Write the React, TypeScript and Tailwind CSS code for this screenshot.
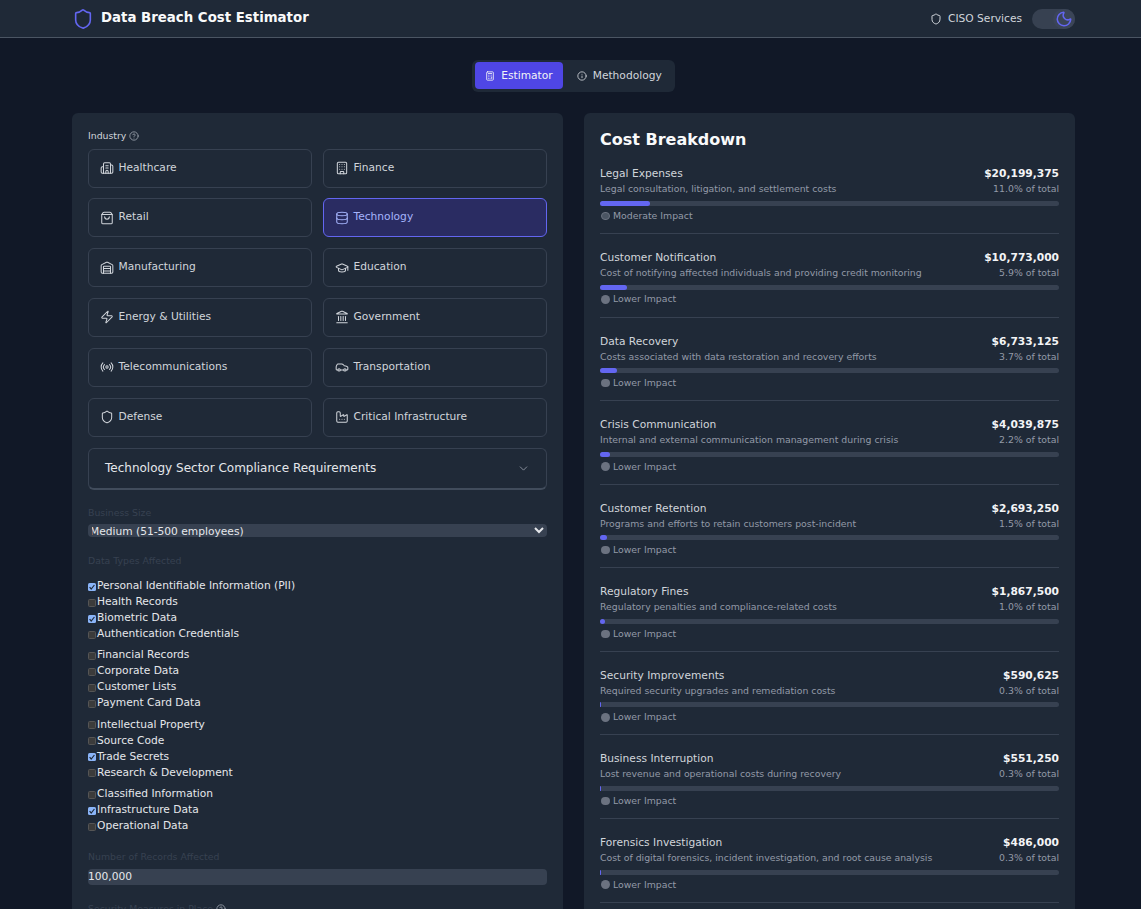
import {
  Building,
  Building2,
  Calculator,
  Car,
  ChevronDown,
  CircleHelp,
  Database,
  Factory,
  GraduationCap,
  Info,
  Landmark,
  Moon,
  Radio,
  Shield,
  ShoppingBag,
  Warehouse,
  Zap,
  type LucideIcon,
} from "lucide-react";

const industries: { name: string; icon: LucideIcon; active?: boolean }[] = [
  { name: "Healthcare", icon: Building2 },
  { name: "Finance", icon: Building },
  { name: "Retail", icon: ShoppingBag },
  { name: "Technology", icon: Database, active: true },
  { name: "Manufacturing", icon: Warehouse },
  { name: "Education", icon: GraduationCap },
  { name: "Energy & Utilities", icon: Zap },
  { name: "Government", icon: Landmark },
  { name: "Telecommunications", icon: Radio },
  { name: "Transportation", icon: Car },
  { name: "Defense", icon: Shield },
  { name: "Critical Infrastructure", icon: Factory },
];

const dataGroups: { label: string; checked?: boolean }[][] = [
  [
    { label: "Personal Identifiable Information (PII)", checked: true },
    { label: "Health Records" },
    { label: "Biometric Data", checked: true },
    { label: "Authentication Credentials" },
  ],
  [
    { label: "Financial Records" },
    { label: "Corporate Data" },
    { label: "Customer Lists" },
    { label: "Payment Card Data" },
  ],
  [
    { label: "Intellectual Property" },
    { label: "Source Code" },
    { label: "Trade Secrets", checked: true },
    { label: "Research & Development" },
  ],
  [
    { label: "Classified Information" },
    { label: "Infrastructure Data", checked: true },
    { label: "Operational Data" },
  ],
];

const costs = [
  { name: "Legal Expenses", desc: "Legal consultation, litigation, and settlement costs", amount: "$20,199,375", pct: 11.0, impact: "Moderate Impact" },
  { name: "Customer Notification", desc: "Cost of notifying affected individuals and providing credit monitoring", amount: "$10,773,000", pct: 5.9, impact: "Lower Impact" },
  { name: "Data Recovery", desc: "Costs associated with data restoration and recovery efforts", amount: "$6,733,125", pct: 3.7, impact: "Lower Impact" },
  { name: "Crisis Communication", desc: "Internal and external communication management during crisis", amount: "$4,039,875", pct: 2.2, impact: "Lower Impact" },
  { name: "Customer Retention", desc: "Programs and efforts to retain customers post-incident", amount: "$2,693,250", pct: 1.5, impact: "Lower Impact" },
  { name: "Regulatory Fines", desc: "Regulatory penalties and compliance-related costs", amount: "$1,867,500", pct: 1.0, impact: "Lower Impact" },
  { name: "Security Improvements", desc: "Required security upgrades and remediation costs", amount: "$590,625", pct: 0.3, impact: "Lower Impact" },
  { name: "Business Interruption", desc: "Lost revenue and operational costs during recovery", amount: "$551,250", pct: 0.3, impact: "Lower Impact" },
  { name: "Forensics Investigation", desc: "Cost of digital forensics, incident investigation, and root cause analysis", amount: "$486,000", pct: 0.3, impact: "Lower Impact" },
];

function Header() {
  return (
    <header className="h-[38px] shrink-0 bg-[#1f2937] border-b border-[#4b5563]">
      <div className="w-[1003px] ml-[72px] h-full flex items-center justify-between">
        <div className="flex items-center gap-[7px]">
          <Shield size={22} strokeWidth={1.75} className="text-[#6366f1]" />
          <h1 className="text-[13.33px] font-bold text-[#f9fafb] mb-[2px]">Data Breach Cost Estimator</h1>
        </div>
        <div className="flex items-center gap-[10px]">
          <span className="flex items-center gap-[6px] text-[10.67px] text-[#d1d5db] mt-[1px]">
            <Shield size={12} />
            CISO Services
          </span>
          <div className="w-[43px] h-[20px] rounded-full bg-[#374151] flex justify-end">
            <div className="w-[22px] h-[20px] rounded-full bg-[#3b4557] flex items-center justify-center">
              <Moon size={18} className="text-[#6366f1]" />
            </div>
          </div>
        </div>
      </div>
    </header>
  );
}

function Tabs() {
  return (
    <div className="w-[1003px] ml-[72px] flex justify-center pt-[22px] pb-[21px]">
      <div className="flex items-start gap-[4px] h-[32px] pt-[2px] px-[3px] rounded-md bg-[#1f2937]">
        <button className="flex items-center gap-[6px] h-[27px] px-[10px] rounded bg-[#4f46e5] text-[10.67px] text-[#f3f4f6]">
          <Calculator size={10} />
          Estimator
        </button>
        <button className="flex items-center gap-[6px] h-[27px] px-[10px] text-[10.67px] text-[#d1d5db]">
          <Info size={10} />
          Methodology
        </button>
      </div>
    </div>
  );
}

function IndustryGrid() {
  return (
    <div className="grid grid-cols-2 gap-x-[11px] gap-y-[10.8px]">
      {industries.map(({ name, icon: Icon, active }) => (
        <button
          key={name}
          className={
            active
              ? "h-[39px] flex items-center gap-[4.5px] px-[11px] rounded-md border border-[#6366f1] bg-[#2a2c62] text-[#a5b4fc] text-[10.67px]"
              : "h-[39px] flex items-center gap-[4.5px] px-[11px] rounded-md border border-[#374151] text-[#d1d5db] text-[10.67px]"
          }
        >
          <Icon size={14} strokeWidth={1.75} className="shrink-0" />
          <span className="mb-[1.1px]">{name}</span>
        </button>
      ))}
    </div>
  );
}

function DimLabel({ children }: { children: React.ReactNode }) {
  return <div className="text-[9.33px] leading-[12px] text-[#374151]">{children}</div>;
}

function DataCheckbox({ label, checked }: { label: string; checked?: boolean }) {
  return (
    <label className="h-[16px] flex items-center text-[10.67px] text-[#e5e7eb]">
      <span
        className={
          checked
            ? "w-[8px] h-[8px] mr-[1px] mt-[1px] shrink-0 rounded-[1.5px] bg-[#8ab4f8] flex items-center justify-center"
            : "w-[8px] h-[8px] mr-[1px] mt-[1px] shrink-0 rounded-[1.5px] bg-[#3b3b3b] border border-[#555555]"
        }
      >
        {checked && (
          <svg viewBox="0 0 8 8" className="w-[8px] h-[8px]" fill="none">
            <path d="M1.6 4.2 3.2 6 6.4 2" stroke="#1f2937" strokeWidth="1.2" />
          </svg>
        )}
      </span>
      {label}
    </label>
  );
}

function LeftCard() {
  return (
    <section className="bg-[#1f2937] rounded-md px-[16px] pt-[16px]">
      <div className="flex items-center gap-[3px] text-[9.33px] leading-[14px] text-[#d1d5db] mb-[5.6px]">
        Industry
        <CircleHelp size={10} className="text-[#9ca3af]" />
      </div>
      <IndustryGrid />

      <div className="mt-[11px] h-[42px] rounded-md border border-[#374151] border-b-2 border-b-[#414c5c] flex items-center justify-between pl-[16px] pr-[16px]">
        <span className="text-[12px] text-[#e5e7eb]">Technology Sector Compliance Requirements</span>
        <ChevronDown size={13} strokeWidth={1.5} className="text-[#9ca3af]" />
      </div>

      <div className="mt-[17px]">
        <DimLabel>Business Size</DimLabel>
        <select className="mt-[5.6px] block w-full h-[13px] rounded bg-[#374151] text-[10.67px] leading-[13px] text-[#e5e7eb] [text-indent:-2px] [color-scheme:dark] outline-none">
          <option>Medium (51-500 employees)</option>
        </select>
      </div>

      <div className="mt-[17.9px]">
        <DimLabel>Data Types Affected</DimLabel>
        <div className="mt-[11px] flex flex-col gap-[5.33px]">
          {dataGroups.map((group) => (
            <div key={group[0].label} className="flex flex-col">
              {group.map((item) => (
                <DataCheckbox key={item.label} label={item.label} checked={item.checked} />
              ))}
            </div>
          ))}
        </div>
      </div>

      <div className="mt-[16.7px]">
        <DimLabel>Number of Records Affected</DimLabel>
        <input
          readOnly
          value="100,000"
          className="mt-[6px] pb-[1px] block w-full h-[16px] rounded bg-[#374151] text-[10.67px] text-[#e5e7eb] outline-none"
        />
      </div>

      <div className="mt-[18px] flex items-center gap-[3px]">
        <DimLabel>Security Measures in Place</DimLabel>
        <CircleHelp size={10} className="text-[#9ca3af]" />
      </div>
    </section>
  );
}

function RightCard() {
  return (
    <section className="bg-[#1f2937] rounded-md px-[16px] pt-[17px]">
      <h2 className="text-[16px] leading-[20px] font-bold text-[#f9fafb] mb-[16.4px]">Cost Breakdown</h2>
      {costs.map((c) => (
        <div key={c.name} className="pb-[10.1px] mb-[16px] border-b border-[#374151]">
          <div className="flex justify-between items-center h-[16px] text-[10.67px]">
            <span className="text-[#d1d5db]">{c.name}</span>
            <span className="font-bold text-[#f3f4f6]">{c.amount}</span>
          </div>
          <div className="flex justify-between items-center h-[14px] text-[9.33px] text-[#939aa7]">
            <span>{c.desc}</span>
            <span>{c.pct.toFixed(1)}% of total</span>
          </div>
          <div className="mt-[4.6px] h-[5px] rounded-full bg-[#374151]">
            <div className="h-full rounded-full bg-[#6366f1]" style={{ width: `${c.pct}%` }} />
          </div>
          <div className="mt-[2.9px] flex items-center gap-[3.5px] h-[14px] text-[9.33px] text-[#939aa7]">
            <span
              className={
                c.impact === "Moderate Impact"
                  ? "w-[8.5px] h-[8.5px] ml-[1px] rounded-full bg-[#4b5563] border border-[#6b7280]"
                  : "w-[8.5px] h-[8.5px] ml-[1px] rounded-full bg-[#6b7280]"
              }
            />
            {c.impact}
          </div>
        </div>
      ))}
    </section>
  );
}

export default function App() {
  return (
    <div className="h-screen overflow-hidden flex flex-col bg-[#111827] font-['DejaVu_Sans',sans-serif]">
      <Header />
      <Tabs />
      <main className="w-[1003px] ml-[72px] grid grid-cols-2 gap-[21px] items-start">
        <LeftCard />
        <RightCard />
      </main>
    </div>
  );
}
